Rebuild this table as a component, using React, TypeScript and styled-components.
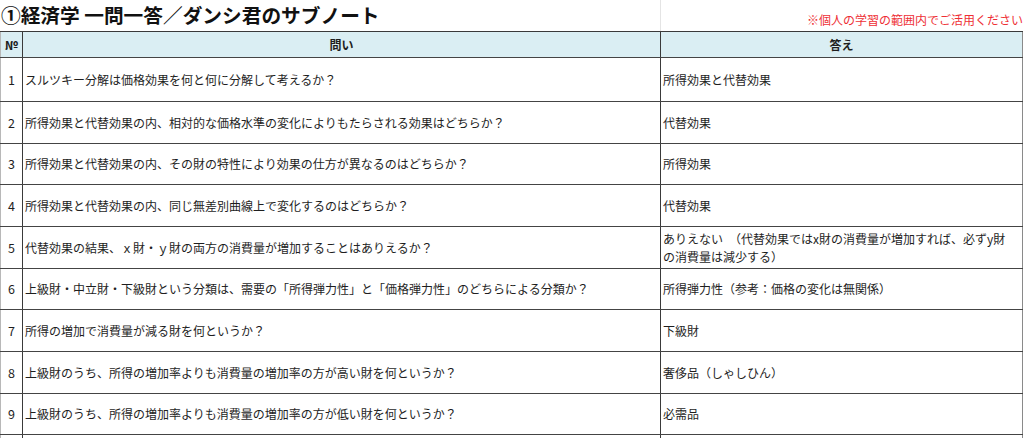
import React from 'react';
import styled, { createGlobalStyle } from 'styled-components';

const GlobalStyle = createGlobalStyle`
  html, body {
    margin: 0;
    padding: 0;
    background: #fff;
  }
  body {
    font-family: "Noto Sans CJK JP", "Noto Sans", sans-serif;
    color: #222;
  }
`;

const Sheet = styled.div`
  width: 1024px;
  height: 438px;
  overflow: hidden;
`;

const TitleBar = styled.div`
  display: grid;
  grid-template-columns: 660px 1fr;
  height: 31px;
`;

const Title = styled.h1`
  margin: 0;
  padding-left: 1px;
  font-size: 19.7px;
  font-weight: 700;
  line-height: 29px;
  color: #111;
  white-space: nowrap;
`;

const NoteCell = styled.div`
  border-left: 1px solid #e4e4e4;
  display: flex;
  align-items: flex-end;
  justify-content: flex-end;
  padding: 0 1px 4px 0;
`;

const Note = styled.span`
  font-size: 12px;
  color: #ee2f35;
  line-height: 14px;
  white-space: nowrap;
`;

const Table = styled.div`
  width: 1023px;
  border-top: 1px solid #3a3a3a;
`;

const Row = styled.div<{ $h: number; $head?: boolean }>`
  display: grid;
  grid-template-columns: 23px 638px 362px;
  height: ${(p) => p.$h}px;
  box-sizing: border-box;
  border-bottom: 1px solid #444;
  background: ${(p) => (p.$head ? '#daeef3' : '#fff')};
  font-weight: ${(p) => (p.$head ? 700 : 400)};
`;

const Cell = styled.div<{ $align?: 'center' | 'left'; $last?: boolean }>`
  display: flex;
  align-items: center;
  justify-content: ${(p) => (p.$align === 'center' ? 'center' : 'flex-start')};
  box-sizing: border-box;
  border-right: 1px solid ${(p) => (p.$last ? '#8a8a8a' : '#3a3a3a')};
  padding: 0 2px;
  font-size: 12px;
  line-height: 18px;
  color: #1e1e1e;
  white-space: nowrap;
  overflow: hidden;
`;

const NumCell = styled(Cell)`
  border-left: 1px solid #b8b8b8;
  padding: 0;
  font-size: 12.5px;
`;

type Item = { q: string; a: React.ReactNode; h: number };

const items: Item[] = [
  { q: 'スルツキー分解は価格効果を何と何に分解して考えるか？', a: '所得効果と代替効果', h: 44 },
  { q: '所得効果と代替効果の内、相対的な価格水準の変化によりもたらされる効果はどちらか？', a: '代替効果', h: 42 },
  { q: '所得効果と代替効果の内、その財の特性により効果の仕方が異なるのはどちらか？', a: '所得効果', h: 41 },
  { q: '所得効果と代替効果の内、同じ無差別曲線上で変化するのはどちらか？', a: '代替効果', h: 42 },
  {
    q: '代替効果の結果、ｘ財・ｙ財の両方の消費量が増加することはありえるか？',
    a: (
      <span>
        ありえない　（代替効果ではx財の消費量が増加すれば、必ずy財
        <br />
        の消費量は減少する）
      </span>
    ),
    h: 42,
  },
  { q: '上級財・中立財・下級財という分類は、需要の「所得弾力性」と「価格弾力性」のどちらによる分類か？', a: '所得弾力性（参考：価格の変化は無関係）', h: 41 },
  { q: '所得の増加で消費量が減る財を何というか？', a: '下級財', h: 42 },
  { q: '上級財のうち、所得の増加率よりも消費量の増加率の方が高い財を何というか？', a: '奢侈品（しゃしひん）', h: 42 },
  { q: '上級財のうち、所得の増加率よりも消費量の増加率の方が低い財を何というか？', a: '必需品', h: 41 },
];

export default function App() {
  return (
    <Sheet>
      <GlobalStyle />
      <TitleBar>
        <Title>①経済学 一問一答／ダンシ君のサブノート</Title>
        <NoteCell>
          <Note>※個人の学習の範囲内でご活用ください</Note>
        </NoteCell>
      </TitleBar>
      <Table>
        <Row $h={26} $head>
          <NumCell $align="center">№</NumCell>
          <Cell $align="center">問い</Cell>
          <Cell $align="center" $last>答え</Cell>
        </Row>
        {items.map((it, i) => (
          <Row key={i} $h={it.h}>
            <NumCell $align="center">{i + 1}</NumCell>
            <Cell>{it.q}</Cell>
            <Cell $last>{it.a}</Cell>
          </Row>
        ))}
        <Row $h={41}>
          <NumCell $align="center" />
          <Cell />
          <Cell $last />
        </Row>
      </Table>
    </Sheet>
  );
}
